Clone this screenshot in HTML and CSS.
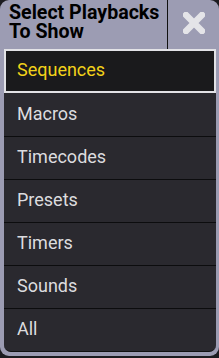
FILE: index.html
```html
<!doctype html>
<html lang="en">
<head>
	<meta charset="UTF-8">
	<title>Select Playbacks</title>
	<link rel="stylesheet" href="styles.css">
</head>
<body>
	<div class="dialog">
		<div class="dialog-head">
			<div class="dialog-title">Select Playbacks To Show</div>
			<div class="dialog-close">
				<svg width="22" height="22" viewBox="0 0 22 22">
					<path d="M3 3 L19 19 M19 3 L3 19" stroke="#e4e4e8" stroke-width="6.5" stroke-linecap="square" fill="none"/>
				</svg>
			</div>
		</div>
		<ul class="options">
			<li class="option selected">Sequences</li>
			<li class="option">Macros</li>
			<li class="option">Timecodes</li>
			<li class="option">Presets</li>
			<li class="option">Timers</li>
			<li class="option">Sounds</li>
			<li class="option">All</li>
		</ul>
	</div>
</body>
</html>
```

FILE: styles.css
```css
html, body {
	margin: 0;
	padding: 0;
	background: #1c1c20;
	font-family: Roboto, "Liberation Sans", sans-serif;
}

.dialog {
	width: 219px;
	height: 356px;
	box-sizing: border-box;
	background: #9c9cb3;
	border-radius: 9px;
	padding: 0 3px 4px 4px;
	display: flex;
	flex-direction: column;
}

.dialog-head {
	height: 49px;
	display: flex;
	margin: 0 -3px 0 -4px;
}
.dialog-title {
	flex: 1;
	padding: 3px 0 0 9px;
	font-size: 19.6px;
	line-height: 19px;
	font-weight: bold;
	color: #000;
	border-right: 1px solid #111;
}
.dialog-close {
	width: 51px;
	display: flex;
	align-items: center;
	justify-content: center;
	padding-bottom: 4px;
	box-sizing: border-box;
}

.options {
	list-style: none;
	margin: 0;
	padding: 0;
	flex: 1;
	background: #2a292f;
	border-radius: 0 0 7px 7px;
	border-bottom: 1px solid #111;
	overflow: hidden;
}
.option {
	height: 43px;
	box-sizing: border-box;
	border-top: 1px solid #0c0c0e;
	display: flex;
	align-items: center;
	padding: 0 0 3px 13px;
	font-size: 18px;
	color: #dcdcdf;
}
.option.selected {
	height: 44px;
	border: 2px solid #e2e2e6;
	background: #1a1a1c;
	color: #f2d21a;
	padding-left: 11px;
}
.option.selected + .option {
	border-top: 0;
}
```
